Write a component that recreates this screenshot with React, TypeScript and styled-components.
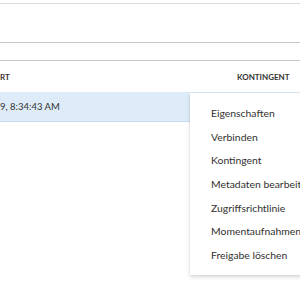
import React from "react";
import styled, { createGlobalStyle } from "styled-components";

const Global = createGlobalStyle`
  html, body { margin: 0; padding: 0; background: #fff; }
  body { font-family: "Segoe UI", Lato, "Liberation Sans", sans-serif; color: #323130; }
`;

const Page = styled.div`
  position: relative;
  width: 300px;
  height: 300px;
  overflow: hidden;
  background: #fff;
`;

const Rule = styled.div<{ $top: number; $color: string }>`
  margin-top: ${(p) => p.$top}px;
  height: 1px;
  background: ${(p) => p.$color};
`;

const HeaderRow = styled.div`
  display: grid;
  grid-template-columns: 237px 1fr;
  height: 31px;
  align-items: center;
  font-size: 8px;
  font-weight: 700;
  color: #323130;
`;

const DataRow = styled.div`
  display: grid;
  grid-template-columns: 237px 1fr;
  height: 29px;
  align-items: center;
  background: #deecf9;
  border-bottom: 1px solid #c7dcef;
  font-size: 9.5px;
  color: #323130;
`;

const Cell = styled.div`
  white-space: nowrap;
  overflow: hidden;
`;

const Menu = styled.ul`
  position: absolute;
  left: 190px;
  top: 93px;
  width: 130px;
  margin: 0;
  padding: 8px 0;
  list-style: none;
  background: #fff;
  box-shadow: 0 1.6px 4px rgba(0, 0, 0, 0.16), 0 0 1px rgba(0, 0, 0, 0.12);
`;

const MenuItem = styled.li`
  height: 23.7px;
  line-height: 24.5px;
  padding-left: 21px;
  font-size: 10.4px;
  color: #323130;
  white-space: nowrap;
`;

const items = [
  "Eigenschaften",
  "Verbinden",
  "Kontingent",
  "Metadaten bearbeiten",
  "Zugriffsrichtlinie",
  "Momentaufnahmen",
  "Freigabe löschen",
];

export default function App() {
  return (
    <Page>
      <Global />
      <Rule $top={3} $color="#dcdcdc" />
      <Rule $top={38} $color="#c8c8c8" />
      <Rule $top={17} $color="#c8c8c8" />
      <HeaderRow>
        <Cell>RT</Cell>
        <Cell>KONTINGENT</Cell>
      </HeaderRow>
      <DataRow>
        <Cell>9, 8:34:43 AM</Cell>
        <Cell />
      </DataRow>
      <Menu>
        {items.map((t) => (
          <MenuItem key={t}>{t}</MenuItem>
        ))}
      </Menu>
    </Page>
  );
}
